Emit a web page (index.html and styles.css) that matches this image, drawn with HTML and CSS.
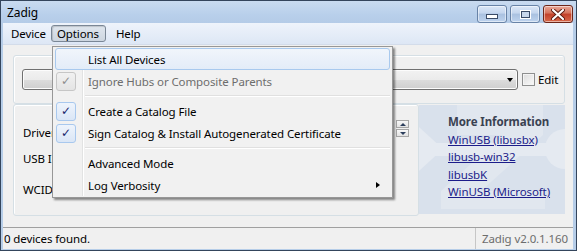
FILE: index.html
```html
<!DOCTYPE html>
<html lang="en">
<head>
  <meta charset="UTF-8">
  <title>Zadig</title>
  <link rel="stylesheet" href="styles.css">
</head>
<body>
  <div class="window">
    <!-- Barre de titre -->
    <div class="titlebar">
      <span class="title">Zadig</span>
      <div class="caption-buttons">
        <span class="cap"><i class="glyph-min"></i></span>
        <span class="cap"><i class="glyph-max"></i></span>
        <span class="cap cap-close">
          <svg width="14" height="11" viewBox="0 0 14 11">
            <path d="M2 1 L12 10 M12 1 L2 10" stroke="#5a1a10" stroke-width="4" stroke-linecap="round"/>
            <path d="M2 1 L12 10 M12 1 L2 10" stroke="#ffffff" stroke-width="2.2" stroke-linecap="round"/>
          </svg>
        </span>
      </div>
    </div>

    <div class="frame">
      <!-- Menu -->
      <div class="menubar">
        <span class="menu-title">Device</span>
        <span class="menu-title open">Options</span>
        <span class="menu-title">Help</span>
      </div>

      <div class="client">
        <div class="group group-top">
          <div class="combo"><span class="combo-arrow"></span></div>
          <span class="checkbox"></span>
          <span class="edit-label">Edit</span>
        </div>

        <div class="lower">
          <div class="group group-driver">
            <div class="labels">
              <div class="field driver">Driver</div>
              <div class="field usbid">USB ID</div>
              <div class="field wcid">WCID</div>
            </div>
            <div class="spinner">
              <span class="spin-btn"><i class="tri-up"></i></span>
              <span class="spin-btn"><i class="tri-down"></i></span>
            </div>
          </div>

          <div class="info">
            <svg class="watermark" width="146" height="109" viewBox="0 0 146 109">
              <rect x="38" y="0" width="86" height="30" fill="#e1e7ef"/>
              <polygon points="84,30 124,30 62,86 22,86" fill="#e1e7ef"/>
              <rect x="22" y="86" width="104" height="18" fill="#e1e7ef"/>
              <rect x="0" y="38" width="146" height="13" fill="#e5eaf1"/>
              <polygon points="0,22 24,44 0,66" fill="#e5eaf1"/>
              <circle cx="146" cy="44" r="20" fill="#e5eaf1"/>
            </svg>
            <div class="info-text">
              <div class="info-title">More Information</div>
              <a href="#">WinUSB (libusbx)</a>
              <a href="#">libusb-win32</a>
              <a href="#">libusbK</a>
              <a href="#">WinUSB (Microsoft)</a>
            </div>
          </div>
        </div>
      </div>

      <div class="statusbar">
        <span class="status-text">0 devices found.</span>
        <span class="status-version">Zadig v2.0.1.160</span>
      </div>
    </div>

    <!-- Menu déroulant Options -->
    <div class="popup">
      <div class="item hover"><span class="gutter"></span><span class="label">List All Devices</span></div>
      <div class="item disabled"><span class="gutter"><span class="check check-gray">&#10003;</span></span><span class="label">Ignore Hubs or Composite Parents</span></div>
      <div class="sep"></div>
      <div class="item"><span class="gutter"><span class="check">&#10003;</span></span><span class="label">Create a Catalog File</span></div>
      <div class="item"><span class="gutter"><span class="check">&#10003;</span></span><span class="label">Sign Catalog &amp; Install Autogenerated Certificate</span></div>
      <div class="sep"></div>
      <div class="item"><span class="gutter"></span><span class="label">Advanced Mode</span></div>
      <div class="item"><span class="gutter"></span><span class="label">Log Verbosity</span><span class="submenu"></span></div>
    </div>
  </div>
</body>
</html>
```

FILE: styles.css
```css
body {
  margin: 0;
  font-family: "Noto Sans", sans-serif;
  font-size: 11.5px;
  letter-spacing: -0.1px;
  color: #000;
}
.window {
  position: relative;
  width: 577px;
  height: 251px;
  box-sizing: border-box;
  border: 1px solid #34455c;
  background: #b6cde8;
  display: flex;
  flex-direction: column;
}
.titlebar {
  height: 22px;
  display: flex;
  align-items: center;
  justify-content: space-between;
  background: linear-gradient(#c9dbf0, #b9d0eb 60%, #b4cbe7);
}
.title {
  margin-left: 6px;
  font-size: 12px;
}
.caption-buttons {
  display: flex;
  gap: 3px;
  margin-right: 3px;
  margin-top: 4px;
  align-self: flex-start;
}
.cap {
  width: 28px;
  height: 16px;
  border: 1px solid #6883a7;
  border-radius: 3px;
  background: linear-gradient(#dce8f7, #c4d6ee 45%, #a9c1e0 50%, #bed3ee);
  display: flex;
  align-items: center;
  justify-content: center;
  box-shadow: inset 0 0 0 1px rgba(255,255,255,0.5);
}
.glyph-min {
  display: block;
  width: 10px;
  height: 3px;
  margin-top: 5px;
  background: #fff;
  border: 1px solid #3a4b66;
}
.glyph-max {
  display: block;
  width: 7px;
  height: 5px;
  border: 1px solid #3a4b66;
  outline: 1px solid #fff;
  background: #c8d7eb;
}
.cap-close {
  border-color: #6d2619;
  background: linear-gradient(#e9a998, #d4715a 45%, #c2412a 50%, #d8684a);
}
.frame {
  flex: 1;
  display: flex;
  flex-direction: column;
  margin: 0 3px 1px 2px;
}
.menubar {
  height: 22px;
  display: flex;
  align-items: center;
  background: linear-gradient(#eef3fb, #dde7f5);
  border-bottom: 1px solid #d3dcea;
  box-sizing: border-box;
}
.menu-title {
  padding: 0 5px;
  height: 17px;
  line-height: 16px;
  box-sizing: border-box;
  border: 1px solid transparent;
}
.menu-title:first-child {
  margin-left: 2px;
}
.menu-title.open {
  padding: 0 6px 0 5px;
  border-color: #7a8796;
  border-radius: 3px;
  background: linear-gradient(#dfe6ee, #cdd6e0);
  box-shadow: inset 1px 1px 1px rgba(0,0,0,0.15);
  margin: 0 4px 0 -1px;
}
.client {
  flex: 1;
  background: #f0f0f0;
  padding: 10px 8px 0 10px;
}
.group {
  box-sizing: border-box;
  border: 1px solid #d5dfe5;
  border-radius: 3px;
  box-shadow: inset 1px 1px 0 #fff;
}
.group-top {
  width: 552px;
  height: 49px;
  display: flex;
  align-items: center;
  padding: 0 0 0 8px;
}
.combo {
  position: relative;
  width: 496px;
  height: 21px;
  box-sizing: border-box;
  border: 1px solid #707070;
  border-radius: 3px;
  background: linear-gradient(#f2f2f2, #ebebeb 50%, #dddddd 51%, #cfcfcf);
  box-shadow: inset 0 0 0 1px #fcfcfc;
}
.combo-arrow {
  position: absolute;
  right: 4px;
  top: 8px;
  border-left: 3px solid transparent;
  border-right: 3px solid transparent;
  border-top: 4px solid #000;
}
.checkbox {
  width: 13px;
  height: 13px;
  box-sizing: border-box;
  margin-left: 4px;
  border: 1px solid #8e8f8f;
  background: linear-gradient(135deg, #dcdcdc, #fafafa);
  box-shadow: inset 0 0 0 1px #f4f4f4;
}
.edit-label {
  margin-left: 3px;
}
.lower {
  display: flex;
  align-items: flex-start;
  width: 552px;
}
.group-driver {
  width: 406px;
  height: 112px;
  display: flex;
  justify-content: space-between;
  padding: 0 9px 0 9px;
}
.labels {
  padding-top: 20px;
}
.field {
  height: 16px;
  line-height: 16px;
}
.usbid {
  margin-top: 10px;
}
.wcid {
  margin-top: 15px;
}
.spinner {
  margin-top: 15px;
  display: flex;
  flex-direction: column;
  gap: 1px;
}
.spin-btn {
  width: 13px;
  height: 8px;
  box-sizing: border-box;
  border: 1px solid #a6a6a6;
  background: linear-gradient(#f8f8f8, #e2e2e2);
  display: flex;
  align-items: center;
  justify-content: center;
}
.tri-up {
  border-left: 3px solid transparent;
  border-right: 3px solid transparent;
  border-bottom: 3px solid #2c3e5c;
}
.tri-down {
  border-left: 3px solid transparent;
  border-right: 3px solid transparent;
  border-top: 3px solid #2c3e5c;
}
.info {
  position: relative;
  width: 146px;
  height: 109px;
  margin-top: 1px;
  background: #d9e1ec;
  overflow: hidden;
}
.watermark {
  position: absolute;
  left: 0;
  top: 0;
}
.info-text {
  position: relative;
  padding: 8px 0 0 29px;
  line-height: 17.5px;
}
.info-title {
  font-weight: bold;
  color: #3a4252;
}
.info a {
  display: block;
  color: #1c1c8a;
  text-decoration: underline;
  width: max-content;
}
.statusbar {
  height: 22px;
  display: flex;
  align-items: center;
  justify-content: space-between;
  background: #f0f0f0;
  border-top: 1px solid #a0a0a0;
  box-sizing: border-box;
}
.status-text {
  margin-left: 1px;
}
.status-version {
  height: 100%;
  display: flex;
  align-items: center;
  padding: 0 5px 0 6px;
  border-left: 1px solid #c6c6c6;
  color: #6d6d6d;
}
.popup {
  position: absolute;
  left: 51px;
  top: 45px;
  width: 341px;
  box-sizing: border-box;
  padding: 1px 2px;
  border: 1px solid #979797;
  background: #f1f1f1;
  box-shadow: 2px 2px 2px rgba(0,0,0,0.45);
}
.popup::before {
  content: "";
  position: absolute;
  left: 29px;
  top: 1px;
  bottom: 1px;
  width: 1px;
  background: #e2e3e3;
  border-right: 1px solid #fff;
}
.item {
  position: relative;
  height: 22px;
  display: flex;
  align-items: center;
  box-sizing: border-box;
  border: 1px solid transparent;
  border-radius: 3px;
}
.item.hover {
  border-color: #a8c9ee;
  background: linear-gradient(#f1f5fb, #e3ecf8);
}
.gutter {
  width: 29px;
  height: 100%;
  display: flex;
  align-items: center;
}
.label {
  padding-left: 3px;
}
.check {
  width: 20px;
  height: 19px;
  box-sizing: border-box;
  border: 1px solid #a8c8ee;
  border-radius: 3px;
  background: linear-gradient(#eef4fc, #dae6f6);
  display: flex;
  align-items: center;
  justify-content: center;
  font-family: "DejaVu Sans", sans-serif;
  font-size: 12px;
  font-weight: bold;
  color: #18246a;
}
.check-gray {
  border-color: #c6c6c6;
  background: linear-gradient(#f1f1f1, #e4e4e4);
  color: #8d8d8d;
  font-weight: normal;
}
.disabled .label {
  color: #6d6d6d;
}
.sep {
  height: 8px;
  margin-left: 30px;
  display: flex;
  align-items: center;
}
.sep::after {
  content: "";
  display: block;
  width: 100%;
  height: 1px;
  background: #e0e0e0;
  border-bottom: 1px solid #fff;
}
.submenu {
  position: absolute;
  right: 9px;
  top: 7px;
  border-top: 3.5px solid transparent;
  border-bottom: 3.5px solid transparent;
  border-left: 4px solid #000;
}
```
